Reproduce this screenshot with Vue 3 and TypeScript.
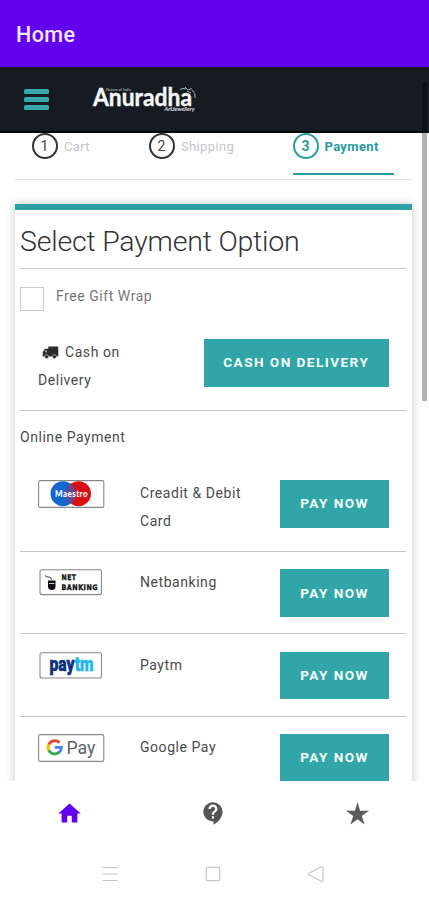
<script setup lang="ts">
interface Step {
  n: number
  label: string
  active?: boolean
}
interface Method {
  id: 'maestro' | 'net' | 'paytm' | 'gpay'
  label: string
}
const steps: Step[] = [
  { n: 1, label: 'Cart' },
  { n: 2, label: 'Shipping' },
  { n: 3, label: 'Payment', active: true },
]
const methods: Method[] = [
  { id: 'maestro', label: 'Creadit & Debit Card' },
  { id: 'net', label: 'Netbanking' },
  { id: 'paytm', label: 'Paytm' },
  { id: 'gpay', label: 'Google Pay' },
]
</script>

<template>
  <div class="screen">
    <header class="appbar">Home</header>
    <div class="sitebar">
      <div class="burger"><i></i><i></i><i></i></div>
      <svg class="logo" width="110" height="34" viewBox="0 0 110 34">
        <text x="4" y="24" class="brand" textLength="99" lengthAdjust="spacingAndGlyphs">Anuradha</text>
        <text x="17" y="8.5" class="tiny" textLength="25" lengthAdjust="spacingAndGlyphs">Nature of India</text>
        <text x="75.5" y="29" class="sub" textLength="30" lengthAdjust="spacingAndGlyphs">ArtJewellery</text>
        <path d="M91 7.500q3-2 6-.5M96 5l3 3 4-1.500M98 9l4 2M103 8q4 3 3 8" />
      </svg>
    </div>
    <main class="view">
      <nav class="steps">
        <div v-for="s in steps" :key="s.n" class="step" :class="{ active: s.active }">
          <span class="num">{{ s.n }}</span><span class="name">{{ s.label }}</span>
        </div>
      </nav>
      <section class="card">
        <h1>Select Payment Option</h1>
        <label class="gift"><span class="box"></span><span>Free Gift Wrap</span></label>
        <div class="cod">
          <p>
            <svg width="17" height="13" viewBox="0 0 17 13">
              <path fill="#2c2c2c" d="M6.300.5h9.200a.8.8 0 0 1 .8.800V10.500H.7V6L3 2.700h3.300z" />
              <path fill="#aaa" d="M4.900 4.300H3.700L2.500 6.200h2.400z" />
              <circle cx="4.600" cy="10.700" r="2" fill="#2c2c2c" stroke="#fff" stroke-width=".5" />
              <circle cx="12.400" cy="10.700" r="2" fill="#2c2c2c" stroke="#fff" stroke-width=".5" />
            </svg>
            Cash on Delivery
          </p>
          <button class="btn">CASH ON DELIVERY</button>
        </div>
        <div class="online">Online Payment</div>
        <div v-for="m in methods" :key="m.id" class="method">
          <div class="pic">
            <svg v-if="m.id === 'maestro'" width="67" height="28" viewBox="0 0 67 28">
              <rect x=".6" y=".6" width="65.200" height="26.800" rx="1.500" class="frame" />
              <circle cx="25" cy="13.700" r="12.500" fill="#1268cf" />
              <circle cx="40.500" cy="13.700" r="12.500" fill="#d90f16" />
              <path d="M32.750 3.900a12.500 12.500 0 0 1 0 19.600a12.500 12.500 0 0 1 0-19.600z" fill="#64489a" />
              <text x="17" y="17.200" class="maestro" textLength="33" lengthAdjust="spacingAndGlyphs">Maestro</text>
            </svg>
            <svg v-else-if="m.id === 'net'" width="67" height="28" viewBox="0 0 67 28">
              <rect x="2" y=".8" width="61.500" height="24.800" rx="2" class="frame" />
              <path d="M7 6.500q2 2 4 1.500t2.500 3" fill="none" stroke="#444" stroke-width="1" />
              <path d="M10 11.500h7.500v6q0 3.600-3.700 3.600T10 17.500z" fill="#111" />
              <path d="M11 14.500h5.500" stroke="#fff" stroke-width=".8" />
              <text x="23.500" y="11.300" class="net" textLength="15" lengthAdjust="spacingAndGlyphs">NET</text>
              <text x="23.500" y="20.700" class="net" textLength="36.500" lengthAdjust="spacingAndGlyphs">BANKING</text>
            </svg>
            <svg v-else-if="m.id === 'paytm'" width="67" height="28" viewBox="0 0 67 28">
              <rect x="2" y=".8" width="61.500" height="25.200" rx="2" class="frame" />
              <text x="11.500" y="19" class="paytm" textLength="44" lengthAdjust="spacingAndGlyphs">pay<tspan class="tm">tm</tspan></text>
            </svg>
            <svg v-else width="67" height="28" viewBox="0 0 67 28">
              <rect x=".6" y=".6" width="65.200" height="26.800" rx="1.500" class="frame" />
              <g fill="none" stroke-width="2.900" transform="translate(-.8 -.3)">
                <path d="M22.300 8.900A6.700 6.700 0 0 0 11.600 10.900" stroke="#ea4335" />
                <path d="M11.800 10.500A6.700 6.700 0 0 0 11.800 17.100" stroke="#fbbc04" />
                <path d="M11.600 16.700A6.700 6.700 0 0 0 22 18.500" stroke="#34a853" />
                <path d="M17.500 13.700H24.200Q24.200 16.800 21.700 18.800" stroke="#4285f4" />
              </g>
              <text x="28.500" y="20" class="gpay" textLength="29" lengthAdjust="spacingAndGlyphs">Pay</text>
            </svg>
          </div>
          <p>{{ m.label }}</p>
          <button class="btn pay">PAY NOW</button>
        </div>
      </section>
    </main>
    <div class="scroll"></div>
    <nav class="tabs">
      <svg viewBox="0 0 24 24"><path fill="#6200ee" d="M10 20v-6h4v6h5v-8h3L12 3 2 12h3v8z" /></svg>
      <svg viewBox="0 0 24 24"><path fill="#555" d="M11.500 2C6.810 2 3 5.810 3 10.500S6.810 19 11.500 19h.5v3c4.860-2.340 8-7 8-11.500C20 5.810 16.190 2 11.500 2zm1 14.500h-2v-2h2v2zm0-3.500h-2c0-3.250 3-3 3-5 0-1.100-.9-2-2-2s-2 .9-2 2h-2c0-2.210 1.790-4 4-4s4 1.790 4 4c0 2.500-3 2.750-3 5z" /></svg>
      <svg viewBox="0 0 24 24"><path fill="#5c5c5c" d="M12 2l2.300 7.500h7.900l-6.400 4.700 2.500 7.500-6.300-4.600-6.300 4.600 2.500-7.500-6.400-4.700h7.900z" /></svg>
    </nav>
    <div class="sysnav">
      <svg viewBox="0 0 18 18"><path d="M1.500 2.500h15M1.500 9h15M1.500 15.500h15" /></svg>
      <svg viewBox="0 0 18 18"><rect x="2.300" y="2.300" width="13.400" height="13.400" rx="1.500" /></svg>
      <svg viewBox="0 0 18 18"><path d="M14.200 1.800q1.800-.5 1.800 1.200v12q0 1.700-1.800 1.200L2 9.800q-1.200-.8 0-1.600z" /></svg>
    </div>
  </div>
</template>

<style>
body {
  margin: 0;
  background: #fefefe;
}
</style>
<style scoped>
.screen {
  position: relative;
  width: 429px;
  height: 900px;
  overflow: hidden;
  display: flex;
  flex-direction: column;
  background: #fefefe;
  font-family: Roboto, 'Liberation Sans', sans-serif;
  color: #4a4a4a;
}
.appbar {
  flex: none;
  box-sizing: border-box;
  height: 67px;
  padding: 3px 16px 0;
  background: #6200ee;
  color: #f3e8ff;
  font-size: 21.500px;
  font-weight: 500;
  line-height: 64px;
  letter-spacing: 0.400px;
}
.sitebar {
  flex: none;
  box-sizing: border-box;
  height: 66px;
  display: flex;
  align-items: flex-start;
  padding: 15px 0 0 24px;
  background: #151b21;
  border-bottom: 2px solid #050607;
}
.burger {
  width: 25px;
  padding-top: 6.500px;
  display: flex;
  flex-direction: column;
  gap: 3px;
}
.burger i {
  height: 5px;
  border-radius: 1.500px;
  background: #35a9ac;
}
.logo {
  margin-left: 40px;
}
.logo path {
  fill: none;
  stroke: #b9bec2;
  stroke-width: 0.900;
}
.brand {
  font: 700 24px Lato, sans-serif;
  fill: #f7f7f7;
  stroke: #f7f7f7;
  stroke-width: 0.400;
}
.tiny {
  font: 700 4px Lato, sans-serif;
  fill: #a3a7aa;
}
.sub {
  font: italic 700 5.500px Lato, sans-serif;
  fill: #e3e5e7;
}
.view {
  flex: none;
  height: 648px;
  overflow: hidden;
  padding: 0 17px 0 15px;
}
.steps {
  height: 46.500px;
  box-sizing: border-box;
  border-bottom: 1px solid #e4e4e4;
  display: flex;
  margin-bottom: 24.500px;
}
.step {
  display: flex;
  align-items: flex-start;
  width: 117px;
  padding-left: 16.500px;
  box-sizing: border-box;
  font-size: 13px;
  letter-spacing: 0.350px;
  color: #c4c5ca;
}
.num {
  box-sizing: border-box;
  flex: none;
  width: 26px;
  height: 26px;
  border: 2px solid #333;
  border-radius: 50%;
  text-align: center;
  line-height: 23px;
  font-size: 14px;
  letter-spacing: 0;
  color: #444;
}
.name {
  margin-left: 6.500px;
  line-height: 27px;
}
.step.active {
  width: 101px;
  height: 42px;
  margin-left: 43.500px;
  padding-left: 0;
  border-bottom: 2px solid #289c9e;
  font-weight: 700;
  color: #289c9e;
}
.active .num {
  border-color: #289c9e;
  color: #289c9e;
}
.active .name {
  margin-left: 6px;
}
.card {
  height: 620px;
  padding: 0 6px 0 5px;
  background: #fff;
  border-top: 6px solid #2ca0a3;
  box-shadow: 0 0 9px rgba(0, 0, 0, 0.220);
  font-size: 14px;
  letter-spacing: 0.550px;
}
h1 {
  margin: 0;
  height: 58px;
  border-bottom: 1px solid #ccc;
  font-size: 28.500px;
  font-weight: 300;
  line-height: 63px;
  letter-spacing: -0.200px;
  white-space: nowrap;
  color: #333;
}
.gift {
  display: flex;
  height: 52px;
  padding-top: 18px;
  color: #777;
}
.box {
  box-sizing: border-box;
  width: 24px;
  height: 24px;
  margin-right: 12px;
  border: 1px solid #ccc;
}
.gift span:last-child {
  line-height: 19px;
}
p {
  margin: 0;
  line-height: 27.500px;
}
.cod {
  display: flex;
  justify-content: space-between;
  height: 71px;
  padding: 0 17px 0 18px;
  border-bottom: 1px solid #c4c4c4;
}
.cod p {
  width: 90px;
}
.cod p svg {
  margin: 0 2px 0 4px;
  vertical-align: -2px;
}
.btn {
  flex: none;
  width: 185.500px;
  height: 47.500px;
  padding: 0 0 1px;
  border: 0;
  background: #31a5a8;
  color: #f3ffff;
  font: 700 13.600px Roboto, sans-serif;
  letter-spacing: 1.450px;
}
.online {
  height: 69px;
  line-height: 52px;
}
.method {
  display: flex;
  height: 64px;
  padding: 0 17px 0 18px;
  margin-bottom: 17.300px;
  border-bottom: 1px solid #c4c4c4;
}
.method:nth-of-type(3) {
  height: 71px;
}
.pic {
  flex: none;
  width: 102px;
}
.pic svg {
  display: block;
}
.method p {
  width: 116px;
  margin-right: auto;
}
.pay {
  width: 109px;
}
.frame {
  fill: #fff;
  stroke: #888;
  stroke-width: 1.100;
}
.maestro {
  font: 900 9.500px Lato, sans-serif;
  fill: #fff;
}
.net {
  font: 700 7.500px 'DejaVu Sans', sans-serif;
  fill: #111;
  stroke: #111;
  stroke-width: 0.350;
}
.paytm {
  font: 900 19.500px Roboto, sans-serif;
  letter-spacing: 0;
  fill: #0c2f7c;
  stroke: #0c2f7c;
  stroke-width: 0.500;
}
.tm {
  fill: #20b4ee;
  stroke: #20b4ee;
}
.gpay {
  font: 400 18.500px Roboto, sans-serif;
  letter-spacing: 0;
  fill: #5f6368;
}
.scroll {
  position: absolute;
  right: 2px;
  top: 82px;
  width: 5px;
  height: 319px;
  background: linear-gradient(#0c1015 0 51px, #b2b2b2 51px);
}
.tabs {
  display: flex;
  gap: 117px;
  height: 66px;
  padding-left: 56px;
}
.tabs svg {
  flex: none;
  width: 27px;
  height: 27px;
  margin-top: 19px;
}
.sysnav {
  display: flex;
  gap: 85px;
  padding: 18px 0 0 101px;
}
.sysnav svg {
  width: 18px;
  height: 18px;
  fill: none;
  stroke: #c6c6c6;
  stroke-width: 1.200;
}
</style>
